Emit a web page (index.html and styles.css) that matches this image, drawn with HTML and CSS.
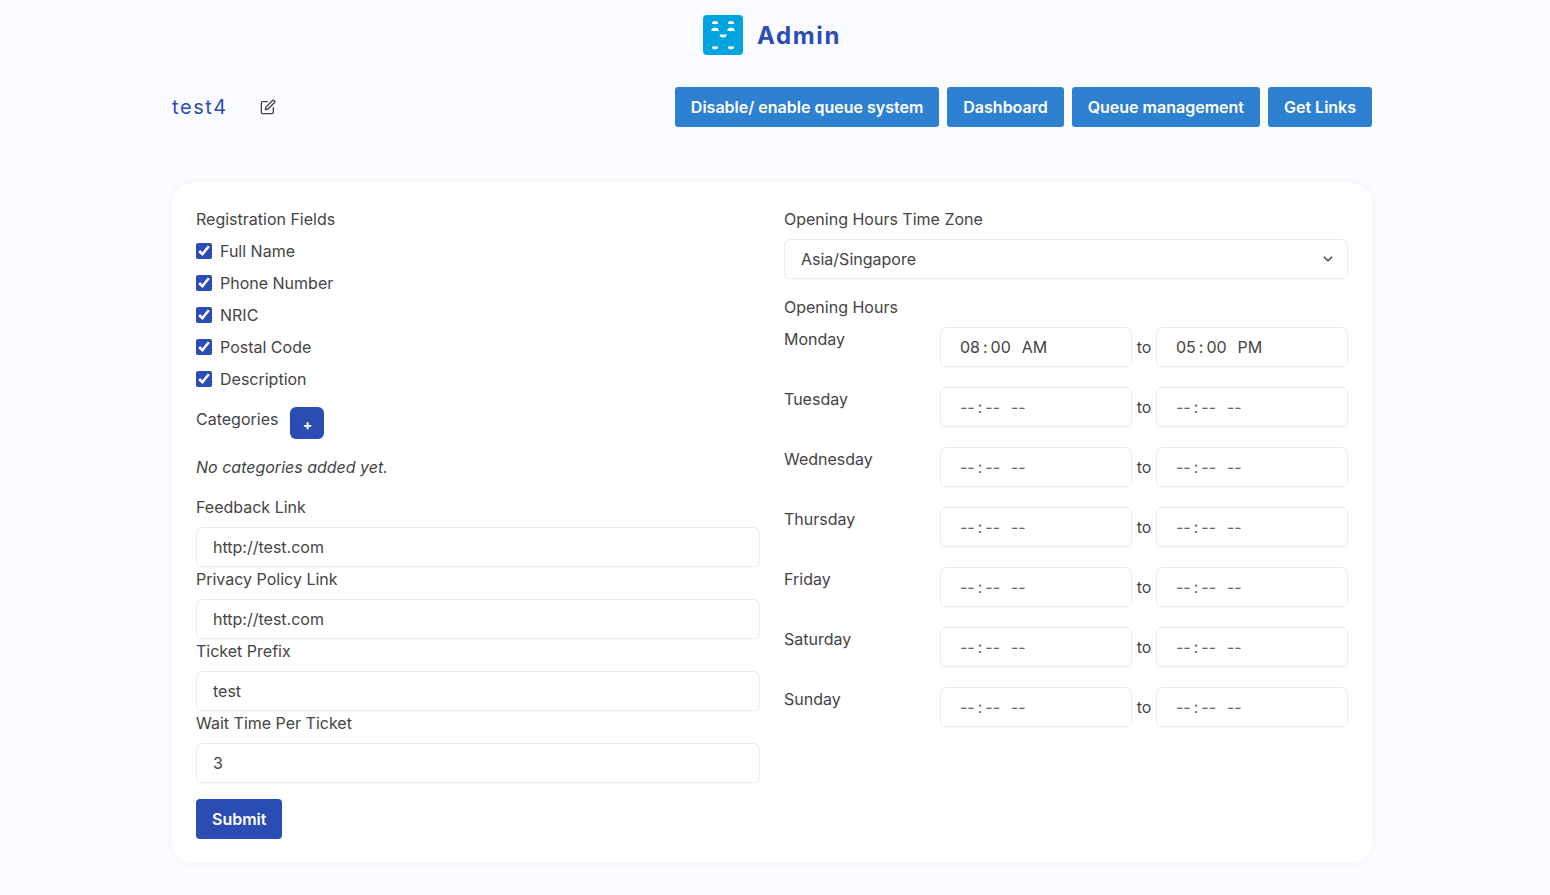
FILE: index.html
```html
<!DOCTYPE html>
<html lang="en">
<head>
    <meta charset="UTF-8">
    <meta name="viewport" content="width=device-width, initial-scale=1.0">
    <title>Admin</title>
    <link rel="stylesheet" href="styles.css">
</head>
<body>
    <header class="brand">
        <svg class="brand-logo" width="40" height="40" viewBox="0 0 40 40">
            <rect width="40" height="40" rx="4" fill="#00a5e0"/>
            <g fill="#fff">
                <path d="M8.800 9a3.200 3 0 0 1 6.400 0z"/>
                <path d="M24.800 9a3.200 3 0 0 1 6.400 0z"/>
                <path d="M8.300 16a3.700 3.300 0 0 1 7.400 0z"/>
                <path d="M24.300 16a3.700 3.300 0 0 1 7.400 0z"/>
                <path d="M16.600 19.500a3.500 3 0 0 0 7 0z"/>
                <path d="M8.800 31.500a3.200 3 0 0 0 6.400 0z"/>
                <path d="M24.800 31.500a3.200 3 0 0 0 6.400 0z"/>
            </g>
        </svg>
        <span class="brand-name">Admin</span>
    </header>

    <main class="container">
        <div class="topbar">
            <div class="queue-name">
                <span class="queue-title">test4</span>
                <svg class="edit-icon" width="16" height="16" viewBox="0 0 24 24" fill="none" stroke="#444" stroke-width="2" stroke-linecap="round" stroke-linejoin="round">
                    <path d="M11 4H4a2 2 0 0 0-2 2v14a2 2 0 0 0 2 2h14a2 2 0 0 0 2-2v-7"/>
                    <path d="M18.500 2.500a2.121 2.121 0 0 1 3 3L12 15l-4 1 1-4 9.500-9.500z"/>
                </svg>
            </div>
            <div class="actions">
                <a class="btn btn-light">Disable/ enable queue system</a>
                <a class="btn btn-light">Dashboard</a>
                <a class="btn btn-light">Queue management</a>
                <a class="btn btn-light">Get Links</a>
            </div>
        </div>

        <form class="card">
            <div class="col">
                <label class="field-label">Registration Fields</label>
                <label class="check"><input type="checkbox" checked> Full Name</label>
                <label class="check"><input type="checkbox" checked> Phone Number</label>
                <label class="check"><input type="checkbox" checked> NRIC</label>
                <label class="check"><input type="checkbox" checked> Postal Code</label>
                <label class="check"><input type="checkbox" checked> Description</label>

                <div class="categories">
                    <span>Categories</span>
                    <button type="button" class="btn-add">+</button>
                </div>
                <p class="empty">No categories added yet.</p>

                <label class="field-label">Feedback Link</label>
                <input class="input" type="text" value="http://test.com">
                <label class="field-label">Privacy Policy Link</label>
                <input class="input" type="text" value="http://test.com">
                <label class="field-label">Ticket Prefix</label>
                <input class="input" type="text" value="test">
                <label class="field-label">Wait Time Per Ticket</label>
                <input class="input" type="text" value="3">

                <button type="button" class="btn btn-submit">Submit</button>
            </div>

            <div class="col">
                <label class="field-label">Opening Hours Time Zone</label>
                <div class="select-wrap">
                    <select class="input select">
                        <option>Asia/Singapore</option>
                    </select>
                    <svg class="chevron" width="10" height="6" viewBox="0 0 10 6" fill="none" stroke="#444" stroke-width="1.500">
                        <path d="M.8.8 5 4.800 9.200.8"/>
                    </svg>
                </div>

                <label class="field-label hours-label">Opening Hours</label>
                <div class="hours">
                    <span>Monday</span>
                    <input class="input time time-set" type="time" value="08:00">
                    <span class="to">to</span>
                    <input class="input time time-set" type="time" value="17:00">

                    <span>Tuesday</span>
                    <input class="input time" type="time">
                    <span class="to">to</span>
                    <input class="input time" type="time">

                    <span>Wednesday</span>
                    <input class="input time" type="time">
                    <span class="to">to</span>
                    <input class="input time" type="time">

                    <span>Thursday</span>
                    <input class="input time" type="time">
                    <span class="to">to</span>
                    <input class="input time" type="time">

                    <span>Friday</span>
                    <input class="input time" type="time">
                    <span class="to">to</span>
                    <input class="input time" type="time">

                    <span>Saturday</span>
                    <input class="input time" type="time">
                    <span class="to">to</span>
                    <input class="input time" type="time">

                    <span>Sunday</span>
                    <input class="input time" type="time">
                    <span class="to">to</span>
                    <input class="input time" type="time">
                </div>
            </div>
        </form>
    </main>
</body>
</html>
```

FILE: styles.css
```css
* {
    box-sizing: border-box;
}
body {
    margin: 0;
    padding: 15px 6px 32px 0;
    background: #fbfcff;
    color: #444;
    font-family: Inter, "Liberation Sans", sans-serif;
    font-size: 16px;
    line-height: 24px;
}
.brand {
    display: flex;
    justify-content: center;
    align-items: center;
    gap: 14px;
    height: 40px;
}
.brand-name {
    padding-top: 1px;
    color: #2b4cb3;
    font-size: 24px;
    font-weight: 700;
    letter-spacing: 1.600px;
}
.container {
    width: 1200px;
    margin: 32px auto 0;
}
.topbar {
    display: flex;
    justify-content: space-between;
    align-items: center;
    height: 40px;
}
.queue-name {
    display: flex;
    align-items: center;
    gap: 32px;
}
.queue-title {
    color: #2b4cb3;
    font-size: 20px;
    letter-spacing: 1.600px;
}
.actions {
    display: flex;
    gap: 8px;
}
.btn {
    display: inline-block;
    height: 40px;
    padding: 8px 16px;
    border: none;
    border-radius: 3px;
    color: #fff;
    font-family: inherit;
    font-size: 16px;
    font-weight: 600;
    line-height: 24px;
}
.btn-light {
    background: #2e81d0;
}
.btn-submit {
    align-self: flex-start;
    margin-top: 16px;
    border-radius: 4px;
    background: #2b4cb3;
}
.card {
    display: grid;
    grid-template-columns: 1fr 1fr;
    gap: 24px;
    margin-top: 56px;
    padding: 24px;
    border-radius: 20px;
    background: #fff;
    box-shadow: 0 0 8px rgba(40, 60, 120, 0.05);
}
.col {
    display: flex;
    flex-direction: column;
    min-width: 0;
}
.field-label {
    margin-bottom: 8px;
}
.check {
    display: flex;
    align-items: center;
    gap: 8px;
    margin-bottom: 8px;
}
.check input {
    width: 16px;
    height: 16px;
    margin: 0;
    accent-color: #2b4cb3;
}
.categories {
    display: flex;
    align-items: flex-start;
    gap: 12px;
    margin-top: 8px;
}
.btn-add {
    width: 34px;
    height: 32px;
    padding: 2px 0 0;
    border: none;
    border-radius: 6px;
    background: #2b4cb3;
    color: #fff;
    font-family: inherit;
    font-size: 14px;
    font-weight: 700;
}
.empty {
    margin: 16px 0;
    font-style: italic;
}
.input {
    width: 100%;
    height: 40px;
    padding: 8px 16px;
    border: 1px solid #ececf0;
    border-radius: 6px;
    background: #fff;
    color: #444;
    font-family: inherit;
    font-size: 16px;
    line-height: 24px;
}
.select-wrap {
    position: relative;
}
.select {
    display: block;
    padding-top: 7px;
    padding-bottom: 9px;
    appearance: none;
}
.chevron {
    position: absolute;
    top: 17px;
    right: 15px;
}
.hours-label {
    margin-top: 16px;
}
.hours {
    display: grid;
    grid-template-columns: 156px 1fr 24px 1fr;
    row-gap: 20px;
}
.to {
    align-self: center;
    text-align: center;
}
.time {
    padding-left: 18px;
    color: #666;
    letter-spacing: 1px;
}
.time::-webkit-calendar-picker-indicator {
    display: none;
}
.time::-webkit-datetime-edit-text {
    padding: 0 2px;
}
.time::-webkit-datetime-edit-ampm-field {
    margin-left: 2px;
}
.time-set {
    color: #444;
    letter-spacing: 0;
}
```
